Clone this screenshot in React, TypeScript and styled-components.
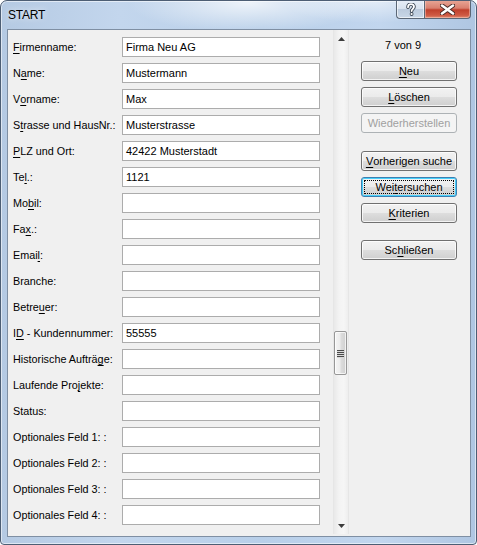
import React from 'react';
import styled, { createGlobalStyle, css } from 'styled-components';

const GlobalStyle = createGlobalStyle`
  html, body { margin: 0; padding: 0; background: #ffffff; }
  body { font-family: "Liberation Sans", Arial, sans-serif; }
  * { box-sizing: border-box; }
`;

const Window = styled.div`
  width: 477px;
  height: 545px;
  border: 1px solid #4d5e74;
  border-radius: 7px 7px 4px 4px;
  overflow: hidden;
  display: flex;
  flex-direction: column;
  background:
    radial-gradient(ellipse 120px 30px at 52% 2px, rgba(255,255,255,0.75), rgba(255,255,255,0) 100%),
    radial-gradient(ellipse 90px 22px at 78% 0px, rgba(255,255,255,0.55), rgba(255,255,255,0) 100%),
    linear-gradient(90deg, #b5cae3 0%, #c3d6ed 25%, #b8cfe9 55%, #c2d6ee 80%, #afc6e2 100%);
  box-shadow: inset 0 0 0 1px rgba(255,255,255,0.55);
`;

const TitleBar = styled.div`
  height: 28px;
  display: flex;
  align-items: flex-start;
  padding-left: 7px;
  padding-right: 5px;
`;

const Title = styled.div`
  font-size: 12px;
  line-height: 28px;
  color: #000;
  text-shadow: 0 0 6px rgba(255,255,255,0.9);
  letter-spacing: -0.2px;
`;

const CaptionButtons = styled.div`
  margin-left: auto;
  display: flex;
  margin-top: -1px;
`;

const CaptionButton = styled.div<{ $kind: 'help' | 'close' }>`
  height: 19px;
  display: flex;
  align-items: center;
  justify-content: center;
  border: 1px solid #5b6776;
  border-top: none;
  ${p => p.$kind === 'help' ? css`
    width: 28px;
    border-right: none;
    border-radius: 0 0 0 4px;
    background: linear-gradient(180deg, #e7eef7 0%, #d9e3ef 48%, #bccbdd 52%, #c9d7e7 100%);
    box-shadow: inset 0 0 0 1px rgba(255,255,255,0.6);
  ` : css`
    width: 47px;
    border-radius: 0 0 4px 0;
    background: linear-gradient(180deg, #e9a898 0%, #d9806f 45%, #c0402c 55%, #cf5a44 85%, #e08a70 100%);
    box-shadow: inset 0 0 0 1px rgba(255,220,210,0.45);
  `}
`;

const Client = styled.div`
  flex: 1;
  margin: 0 5px 7px 6px;
  border: 1px solid #7f8fa3;
  background: #f0f0f0;
  display: flex;
  overflow: hidden;
`;

const FormPane = styled.div`
  width: 325px;
  padding: 7px 0 0 5px;
  display: grid;
  grid-template-columns: 109px 198px;
  grid-auto-rows: 20px;
  row-gap: 6px;
  align-content: start;
  overflow: hidden;
`;

const Label = styled.label`
  font-size: 10.8px;
  color: #000;
  display: flex;
  align-items: center;
  white-space: pre;
`;

const U = styled.span`
  text-decoration: underline;
  text-underline-offset: 2px;
`;

const Field = styled.div`
  height: 20px;
  border: 1px solid #acacac;
  background: #ffffff;
  font-size: 11px;
  color: #000;
  padding: 0 3px;
  display: flex;
  align-items: center;
  white-space: nowrap;
  overflow: hidden;
`;

const ScrollBar = styled.div`
  width: 16px;
  display: flex;
  flex-direction: column;
  align-items: stretch;
  margin-bottom: 2px;
  border-left: 1px solid #e6e6e6;
  border-right: 1px solid #e6e6e6;
  background: linear-gradient(90deg, #e9e9e9 0%, #f3f3f3 35%, #f6f6f6 70%, #eeeeee 100%);
`;

const ArrowButton = styled.div`
  height: 17px;
  display: flex;
  align-items: center;
  justify-content: center;
`;

const Track = styled.div`
  flex: 1;
  display: flex;
  flex-direction: column;
  padding-top: 284px;
`;

const Thumb = styled.div`
  height: 44px;
  margin-right: 1px;
  border: 1px solid #979797;
  border-radius: 2px;
  background: linear-gradient(90deg, #f5f5f5 0%, #ececec 45%, #dcdcdc 55%, #d0d0d0 100%);
  box-shadow: inset 0 0 0 1px rgba(255,255,255,0.7);
  display: flex;
  flex-direction: column;
  align-items: center;
  justify-content: center;
  gap: 1px;
`;

const Grip = styled.span`
  width: 7px;
  height: 1px;
  background: #4a4a4a;
  box-shadow: 0 1px 0 #d8d8d8;
`;

const SidePanel = styled.div`
  flex: 1;
  padding: 9px 0 0 12px;
  display: flex;
  flex-direction: column;
`;

const Counter = styled.div`
  width: 96px;
  height: 13px;
  font-size: 11px;
  line-height: 13px;
  text-align: center;
  padding-right: 12px;
  margin-bottom: 9px;
  color: #000;
`;

const ButtonGroup = styled.div<{ $after?: number }>`
  display: flex;
  flex-direction: column;
  gap: 6px;
  margin-bottom: ${p => p.$after ?? 0}px;
`;

const Btn = styled.div<{ $disabled?: boolean; $focused?: boolean }>`
  width: 96px;
  height: 20px;
  border: 1px solid #707070;
  border-radius: 3px;
  background: linear-gradient(180deg, #f2f2f2 0%, #ebebeb 48%, #dddddd 52%, #cfcfcf 100%);
  box-shadow: inset 0 0 0 1px rgba(255,255,255,0.75);
  font-size: 11px;
  color: #000;
  display: flex;
  align-items: center;
  justify-content: center;
  white-space: nowrap;
  ${p => p.$disabled && css`
    border-color: #adb2b5;
    background: #f4f4f4;
    color: #a0a0a0;
    box-shadow: none;
  `}
  ${p => p.$focused && css`
    border-color: #3c7fb1;
    box-shadow: inset 0 0 0 1px #48d0fb;
    outline: 1px dotted #000;
    outline-offset: -4px;
  `}
`;

type Row = { label: React.ReactNode; value?: string };

const rows: Row[] = [
  { label: <><U>F</U>irmenname:</>, value: 'Firma Neu AG' },
  { label: <>N<U>a</U>me:</>, value: 'Mustermann' },
  { label: <>V<U>o</U>rname:</>, value: 'Max' },
  { label: <>S<U>t</U>rasse und HausNr.:</>, value: 'Musterstrasse' },
  { label: <><U>P</U>LZ und Ort:</>, value: '42422 Musterstadt' },
  { label: <>Te<U>l</U>.:</>, value: '1121' },
  { label: <>Mo<U>b</U>il:</> },
  { label: <>Fa<U>x</U>.:</> },
  { label: <>Emai<U>l</U>:</> },
  { label: <>Branche:</> },
  { label: <>Betre<U>u</U>er:</> },
  { label: <>I<U>D</U>{' - Kundennummer:'}</>, value: '55555' },
  { label: <>Historische Auftr&auml;<U>g</U>e:</> },
  { label: <>Laufende Pro<U>j</U>ekte:</> },
  { label: <>Status:</> },
  { label: <>Optionales Feld 1: :</> },
  { label: <>Optionales Feld 2: :</> },
  { label: <>Optionales Feld 3: :</> },
  { label: <>Optionales Feld 4: :</> },
];

export default function App() {
  return (
    <>
      <GlobalStyle />
      <Window>
        <TitleBar>
          <Title>START</Title>
          <CaptionButtons>
            <CaptionButton $kind="help">
              <svg width="10" height="13" viewBox="0 0 10 13">
                <path d="M2 4.2 C2 1.8 3.4 1.2 5 1.2 C6.8 1.2 8 2.2 8 3.8 C8 5.6 5.6 6 5.6 8" fill="none" stroke="#3b4654" strokeWidth="3.6" strokeLinecap="round" />
                <path d="M2 4.2 C2 1.8 3.4 1.2 5 1.2 C6.8 1.2 8 2.2 8 3.8 C8 5.6 5.6 6 5.6 8" fill="none" stroke="#ffffff" strokeWidth="1.8" strokeLinecap="round" />
                <circle cx="5.6" cy="11" r="1.9" fill="#3b4654" />
                <circle cx="5.6" cy="11" r="1.1" fill="#ffffff" />
              </svg>
            </CaptionButton>
            <CaptionButton $kind="close">
              <svg width="15" height="11" viewBox="0 0 15 11">
                <path d="M2 1.5 L13 9.5 M13 1.5 L2 9.5" stroke="#4a2a26" strokeWidth="4.4" strokeLinecap="round" />
                <path d="M2 1.5 L13 9.5 M13 1.5 L2 9.5" stroke="#ffffff" strokeWidth="2.6" strokeLinecap="round" />
              </svg>
            </CaptionButton>
          </CaptionButtons>
        </TitleBar>
        <Client>
          <FormPane>
            {rows.map((r, i) => (
              <React.Fragment key={i}>
                <Label>{r.label}</Label>
                <Field>{r.value ?? ''}</Field>
              </React.Fragment>
            ))}
          </FormPane>
          <ScrollBar>
            <ArrowButton>
              <svg width="7" height="4" viewBox="0 0 7 4"><path d="M0 4 L3.5 0 L7 4 Z" fill="#3c3c3c" /></svg>
            </ArrowButton>
            <Track>
              <Thumb>
                <Grip /><Grip /><Grip /><Grip />
              </Thumb>
            </Track>
            <ArrowButton>
              <svg width="7" height="4" viewBox="0 0 7 4"><path d="M0 0 L7 0 L3.5 4 Z" fill="#3c3c3c" /></svg>
            </ArrowButton>
          </ScrollBar>
          <SidePanel>
            <Counter>7 von 9</Counter>
            <ButtonGroup $after={18}>
              <Btn><U>N</U>eu</Btn>
              <Btn><U>L</U>&ouml;schen</Btn>
              <Btn $disabled>Wiederherstellen</Btn>
            </ButtonGroup>
            <ButtonGroup $after={17}>
              <Btn><U>V</U>orherigen suche</Btn>
              <Btn $focused>Wei<U>t</U>ersuchen</Btn>
              <Btn><U>K</U>riterien</Btn>
            </ButtonGroup>
            <ButtonGroup>
              <Btn>Sc<U>h</U>lie&szlig;en</Btn>
            </ButtonGroup>
          </SidePanel>
        </Client>
      </Window>
    </>
  );
}
